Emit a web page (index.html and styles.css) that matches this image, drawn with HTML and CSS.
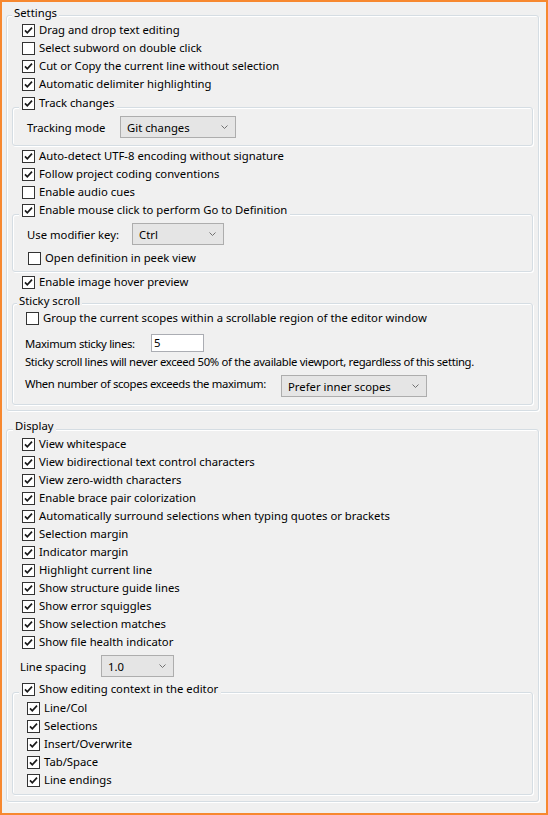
FILE: index.html
```html
<!DOCTYPE html>
<html>
<head>
<meta charset="utf-8">
<link rel="stylesheet" href="styles.css">
</head>
<body>
<div class="win">
  <div class="group outer g-settings">
    <div class="head h-settings">Settings</div>
    <div class="block first">
      <div class="row lv1"><span class="cb on"><svg viewBox="0 0 11 11"><path d="M2 5.3 L4.3 7.8 L9 2.6"/></svg></span><span>Drag and drop text editing</span></div>
      <div class="row lv1"><span class="cb"></span><span>Select subword on double click</span></div>
      <div class="row lv1"><span class="cb on"><svg viewBox="0 0 11 11"><path d="M2 5.3 L4.3 7.8 L9 2.6"/></svg></span><span>Cut or Copy the current line without selection</span></div>
      <div class="row lv1"><span class="cb on"><svg viewBox="0 0 11 11"><path d="M2 5.3 L4.3 7.8 L9 2.6"/></svg></span><span>Automatic delimiter highlighting</span></div>
    </div>

    <div class="group inner g-track">
      <div class="head row hcb"><span class="cb on"><svg viewBox="0 0 11 11"><path d="M2 5.3 L4.3 7.8 L9 2.6"/></svg></span><span>Track changes</span></div>
      <div class="field f-track">
        <span class="lbl l-track">Tracking mode</span>
        <div class="combo c-track"><span>Git changes</span><svg class="chev" viewBox="0 0 7 4"><path d="M0.5 0.5 L3.5 3.5 L6.5 0.5"/></svg></div>
      </div>
    </div>

    <div class="block after-track">
      <div class="row lv1"><span class="cb on"><svg viewBox="0 0 11 11"><path d="M2 5.3 L4.3 7.8 L9 2.6"/></svg></span><span>Auto-detect UTF-8 encoding without signature</span></div>
      <div class="row lv1"><span class="cb on"><svg viewBox="0 0 11 11"><path d="M2 5.3 L4.3 7.8 L9 2.6"/></svg></span><span>Follow project coding conventions</span></div>
      <div class="row lv1"><span class="cb"></span><span>Enable audio cues</span></div>
    </div>

    <div class="group inner g-mouse">
      <div class="head row hcb"><span class="cb on"><svg viewBox="0 0 11 11"><path d="M2 5.3 L4.3 7.8 L9 2.6"/></svg></span><span>Enable mouse click to perform Go to Definition</span></div>
      <div class="field f-mouse">
        <span class="lbl l-mouse">Use modifier key:</span>
        <div class="combo c-mouse"><span>Ctrl</span><svg class="chev" viewBox="0 0 7 4"><path d="M0.5 0.5 L3.5 3.5 L6.5 0.5"/></svg></div>
      </div>
      <div class="row lv2 peek"><span class="cb"></span><span>Open definition in peek view</span></div>
    </div>

    <div class="block after-mouse">
      <div class="row lv1"><span class="cb on"><svg viewBox="0 0 11 11"><path d="M2 5.3 L4.3 7.8 L9 2.6"/></svg></span><span>Enable image hover preview</span></div>
    </div>

    <div class="group inner g-sticky">
      <div class="head h-sticky">Sticky scroll</div>
      <div class="row lv3 first-sticky"><span class="cb"></span><span>Group the current scopes within a scrollable region of the editor window</span></div>
      <div class="field f-max">
        <span class="lbl tight l-max">Maximum sticky lines:</span>
        <div class="input">5</div>
      </div>
      <div class="note tight">Sticky scroll lines will never exceed 50% of the available viewport, regardless of this setting.</div>
      <div class="field f-when">
        <span class="lbl tight l-when">When number of scopes exceeds the maximum:</span>
        <div class="combo c-when"><span>Prefer inner scopes</span><svg class="chev" viewBox="0 0 7 4"><path d="M0.5 0.5 L3.5 3.5 L6.5 0.5"/></svg></div>
      </div>
    </div>
  </div>

  <div class="group outer g-display">
    <div class="head h-display">Display</div>
    <div class="block first-display">
      <div class="row lv1"><span class="cb on"><svg viewBox="0 0 11 11"><path d="M2 5.3 L4.3 7.8 L9 2.6"/></svg></span><span>View whitespace</span></div>
      <div class="row lv1"><span class="cb on"><svg viewBox="0 0 11 11"><path d="M2 5.3 L4.3 7.8 L9 2.6"/></svg></span><span>View bidirectional text control characters</span></div>
      <div class="row lv1"><span class="cb on"><svg viewBox="0 0 11 11"><path d="M2 5.3 L4.3 7.8 L9 2.6"/></svg></span><span>View zero-width characters</span></div>
      <div class="row lv1"><span class="cb on"><svg viewBox="0 0 11 11"><path d="M2 5.3 L4.3 7.8 L9 2.6"/></svg></span><span>Enable brace pair colorization</span></div>
      <div class="row lv1"><span class="cb on"><svg viewBox="0 0 11 11"><path d="M2 5.3 L4.3 7.8 L9 2.6"/></svg></span><span>Automatically surround selections when typing quotes or brackets</span></div>
      <div class="row lv1"><span class="cb on"><svg viewBox="0 0 11 11"><path d="M2 5.3 L4.3 7.8 L9 2.6"/></svg></span><span>Selection margin</span></div>
      <div class="row lv1"><span class="cb on"><svg viewBox="0 0 11 11"><path d="M2 5.3 L4.3 7.8 L9 2.6"/></svg></span><span>Indicator margin</span></div>
      <div class="row lv1"><span class="cb on"><svg viewBox="0 0 11 11"><path d="M2 5.3 L4.3 7.8 L9 2.6"/></svg></span><span>Highlight current line</span></div>
      <div class="row lv1"><span class="cb on"><svg viewBox="0 0 11 11"><path d="M2 5.3 L4.3 7.8 L9 2.6"/></svg></span><span>Show structure guide lines</span></div>
      <div class="row lv1"><span class="cb on"><svg viewBox="0 0 11 11"><path d="M2 5.3 L4.3 7.8 L9 2.6"/></svg></span><span>Show error squiggles</span></div>
      <div class="row lv1"><span class="cb on"><svg viewBox="0 0 11 11"><path d="M2 5.3 L4.3 7.8 L9 2.6"/></svg></span><span>Show selection matches</span></div>
      <div class="row lv1"><span class="cb on"><svg viewBox="0 0 11 11"><path d="M2 5.3 L4.3 7.8 L9 2.6"/></svg></span><span>Show file health indicator</span></div>
    </div>
    <div class="field f-spacing">
      <span class="lbl l-spacing">Line spacing</span>
      <div class="combo c-spacing"><span>1.0</span><svg class="chev" viewBox="0 0 7 4"><path d="M0.5 0.5 L3.5 3.5 L6.5 0.5"/></svg></div>
    </div>
    <div class="group inner g-context">
      <div class="head row hcb"><span class="cb on"><svg viewBox="0 0 11 11"><path d="M2 5.3 L4.3 7.8 L9 2.6"/></svg></span><span>Show editing context in the editor</span></div>
      <div class="block first-context">
        <div class="row lv2"><span class="cb on"><svg viewBox="0 0 11 11"><path d="M2 5.3 L4.3 7.8 L9 2.6"/></svg></span><span>Line/Col</span></div>
        <div class="row lv2"><span class="cb on"><svg viewBox="0 0 11 11"><path d="M2 5.3 L4.3 7.8 L9 2.6"/></svg></span><span>Selections</span></div>
        <div class="row lv2"><span class="cb on"><svg viewBox="0 0 11 11"><path d="M2 5.3 L4.3 7.8 L9 2.6"/></svg></span><span>Insert/Overwrite</span></div>
        <div class="row lv2"><span class="cb on"><svg viewBox="0 0 11 11"><path d="M2 5.3 L4.3 7.8 L9 2.6"/></svg></span><span>Tab/Space</span></div>
        <div class="row lv2"><span class="cb on"><svg viewBox="0 0 11 11"><path d="M2 5.3 L4.3 7.8 L9 2.6"/></svg></span><span>Line endings</span></div>
      </div>
    </div>
  </div>
</div>
</body>
</html>
```

FILE: styles.css
```css
html, body {
  margin: 0;
  padding: 0;
  background: #f0f0f0;
}

.win {
  width: 548px;
  height: 815px;
  box-sizing: border-box;
  border: 2px solid #f7882f;
  background: #f0f0f0;
  padding: 0 7px 0 4px;
  overflow: hidden;
  font-family: "Noto Sans", "Open Sans", sans-serif;
  font-size: 11.3px;
  color: #000;
}

/* group boxes */
.group {
  border: 1px solid #d5dde3;
  border-radius: 3px;
  box-shadow: inset 1px 1px 0 #fff, 1px 1px 0 #fff;
}
.inner {
  margin-left: 5px;
  margin-right: 5px;
}
.g-settings { margin-top: 13px; padding-bottom: 5px; }
.g-display { margin-top: 18px; padding-bottom: 6px; }

.head {
  width: fit-content;
  background: #f0f0f0;
  line-height: 16px;
  padding: 0 2px;
}
.h-settings { margin-top: -11px; margin-left: 5px; }
.h-display { margin-top: -12px; margin-left: 6px; }
.h-sticky { margin-top: -11px; margin-left: 4px; }

.hcb {
  margin-left: 6px;
  padding: 0 3px;
  line-height: 18px;
}

.first { margin-top: 0; }
.first-display { margin-top: 1px; }

/* rows */
.row {
  display: flex;
  align-items: flex-start;
  height: 18px;
  line-height: 18px;
  white-space: nowrap;
}
.lv1 { padding-left: 15px; }
.lv2 { padding-left: 14px; }
.lv3 { padding-left: 13px; }

.cb {
  flex: none;
  width: 13px;
  height: 13px;
  box-sizing: border-box;
  border: 1px solid #333;
  background: #fff;
  margin-top: 3px;
  margin-right: 4px;
}
.cb svg {
  display: block;
  width: 11px;
  height: 11px;
  fill: none;
  stroke: #1a1a1a;
  stroke-width: 1.7;
}

/* fields */
.field {
  display: flex;
  align-items: center;
  white-space: nowrap;
}
.lbl { flex: none; }
.tight { letter-spacing: -0.33px; }

.combo {
  flex: none;
  height: 22px;
  box-sizing: border-box;
  border: 1px solid #adadad;
  background: #e5e5e5;
  display: flex;
  align-items: center;
  justify-content: space-between;
  padding: 0 7px 0 6px;
}
.chev {
  width: 7px;
  height: 4px;
  fill: none;
  stroke: #707070;
  stroke-width: 1;
}

.input {
  flex: none;
  width: 53px;
  height: 18px;
  line-height: 16px;
  box-sizing: border-box;
  border: 1px solid #abadb3;
  background: #fff;
  padding-left: 2px;
}

/* track changes group */
.g-track { margin-top: 14px; padding-bottom: 7px; }
.g-track .hcb { margin-top: -14px; }
.f-track { margin-top: 4px; padding-left: 14px; height: 22px; }
.l-track { width: 93px; }
.c-track { width: 116px; }

.after-track { margin-top: 1px; }

/* mouse group */
.g-mouse { margin-top: 13px; padding-bottom: 4px; }
.g-mouse .hcb { margin-top: -14px; }
.f-mouse { margin-top: 4px; padding-left: 14px; height: 22px; }
.l-mouse { width: 105px; }
.c-mouse { width: 92px; }
.peek { margin-top: 4px; padding-left: 15px; }

.after-mouse { margin-top: 1px; }

/* sticky group */
.g-sticky { margin-top: 12px; padding-bottom: 7px; }
.first-sticky { margin-top: 0; }
.f-max { margin-top: 7px; padding-left: 12px; height: 18px; }
.l-max { width: 126px; }
.note { margin-top: 2px; padding-left: 12px; line-height: 16px; white-space: nowrap; }
.f-when { margin-top: 5px; padding-left: 12px; height: 22px; align-items: flex-start; }
.l-when { width: 256px; line-height: 16px; margin-top: 1px; }
.c-when { width: 146px; }

/* display */
.f-spacing { margin-top: 4px; padding-left: 13px; height: 22px; }
.l-spacing { width: 81px; }
.c-spacing { width: 73px; }

.g-context { margin-top: 15px; padding-bottom: 5px; }
.g-context .hcb { margin-top: -13px; }
.first-context { margin-top: 1px; }
```
